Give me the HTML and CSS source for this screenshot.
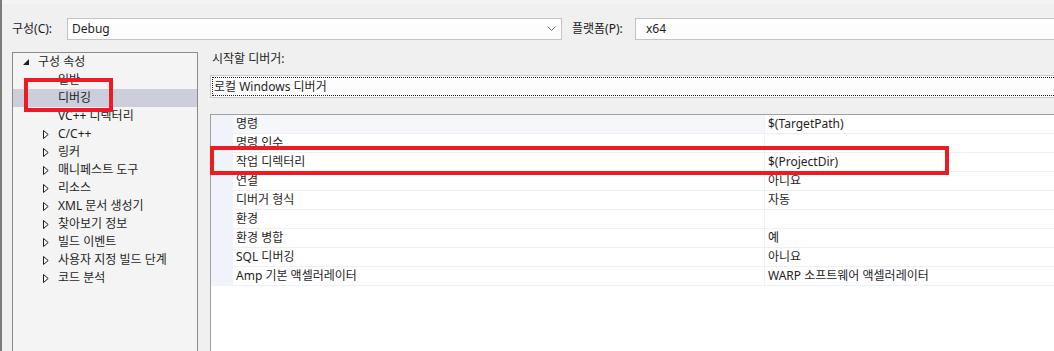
FILE: index.html
```html
<!DOCTYPE html>
<html lang="ko">
<head>
<meta charset="utf-8">
<link rel="stylesheet" href="styles.css">
</head>
<body>
<div class="frame">
  <div class="topband"></div>
  <div class="config-row">
    <span class="lbl lbl-config">구성(C):</span>
    <div class="combo combo-config">
      <span>Debug</span>
      <svg class="chev" width="9" height="6" viewBox="0 0 9 6"><polyline points="0.5,0.5 4.5,4.5 8.5,0.5" fill="none" stroke="#707070" stroke-width="1"/></svg>
    </div>
    <span class="lbl lbl-platform">플랫폼(P):</span>
    <div class="combo combo-platform"><span>x64</span></div>
  </div>
  <div class="main">
    <div class="tree">
      <div class="trow l0"><span class="ico"><svg width="6" height="6" viewBox="0 0 6 6"><polygon points="6,0 6,6 0,6" fill="#1e1e1e"/></svg></span><span>구성 속성</span></div>
      <div class="trow l1"><span class="ico"></span><span>일반</span></div>
      <div class="trow l1 sel"><span class="ico"></span><span>디버깅</span></div>
      <div class="trow l1"><span class="ico"></span><span>VC++ 디렉터리</span></div>
      <div class="trow l1"><span class="ico"><svg width="6" height="9" viewBox="0 0 6 9"><polygon points="0.5,0.5 5.2,4.5 0.5,8.5" fill="none" stroke="#1e1e1e" stroke-width="1"/></svg></span><span>C/C++</span></div>
      <div class="trow l1"><span class="ico"><svg width="6" height="9" viewBox="0 0 6 9"><polygon points="0.5,0.5 5.2,4.5 0.5,8.5" fill="none" stroke="#1e1e1e" stroke-width="1"/></svg></span><span>링커</span></div>
      <div class="trow l1"><span class="ico"><svg width="6" height="9" viewBox="0 0 6 9"><polygon points="0.5,0.5 5.2,4.5 0.5,8.5" fill="none" stroke="#1e1e1e" stroke-width="1"/></svg></span><span>매니페스트 도구</span></div>
      <div class="trow l1"><span class="ico"><svg width="6" height="9" viewBox="0 0 6 9"><polygon points="0.5,0.5 5.2,4.5 0.5,8.5" fill="none" stroke="#1e1e1e" stroke-width="1"/></svg></span><span>리소스</span></div>
      <div class="trow l1"><span class="ico"><svg width="6" height="9" viewBox="0 0 6 9"><polygon points="0.5,0.5 5.2,4.5 0.5,8.5" fill="none" stroke="#1e1e1e" stroke-width="1"/></svg></span><span>XML 문서 생성기</span></div>
      <div class="trow l1"><span class="ico"><svg width="6" height="9" viewBox="0 0 6 9"><polygon points="0.5,0.5 5.2,4.5 0.5,8.5" fill="none" stroke="#1e1e1e" stroke-width="1"/></svg></span><span>찾아보기 정보</span></div>
      <div class="trow l1"><span class="ico"><svg width="6" height="9" viewBox="0 0 6 9"><polygon points="0.5,0.5 5.2,4.5 0.5,8.5" fill="none" stroke="#1e1e1e" stroke-width="1"/></svg></span><span>빌드 이벤트</span></div>
      <div class="trow l1"><span class="ico"><svg width="6" height="9" viewBox="0 0 6 9"><polygon points="0.5,0.5 5.2,4.5 0.5,8.5" fill="none" stroke="#1e1e1e" stroke-width="1"/></svg></span><span>사용자 지정 빌드 단계</span></div>
      <div class="trow l1"><span class="ico"><svg width="6" height="9" viewBox="0 0 6 9"><polygon points="0.5,0.5 5.2,4.5 0.5,8.5" fill="none" stroke="#1e1e1e" stroke-width="1"/></svg></span><span>코드 분석</span></div>
    </div>
    <div class="panel">
      <div class="panel-lbl">시작할 디버거:</div>
      <div class="debugger-box"><div class="focus">로컬 Windows 디버거</div></div>
      <div class="grid">
        <div class="grow first"><span class="gm"></span><span class="gn">명령</span><span class="gv">$(TargetPath)</span></div>
        <div class="grow"><span class="gm"></span><span class="gn">명령 인수</span><span class="gv"></span></div>
        <div class="grow"><span class="gm"></span><span class="gn">작업 디렉터리</span><span class="gv">$(ProjectDir)</span></div>
        <div class="grow"><span class="gm"></span><span class="gn">연결</span><span class="gv">아니요</span></div>
        <div class="grow"><span class="gm"></span><span class="gn">디버거 형식</span><span class="gv">자동</span></div>
        <div class="grow"><span class="gm"></span><span class="gn">환경</span><span class="gv"></span></div>
        <div class="grow"><span class="gm"></span><span class="gn">환경 병합</span><span class="gv">예</span></div>
        <div class="grow"><span class="gm"></span><span class="gn">SQL 디버깅</span><span class="gv">아니요</span></div>
        <div class="grow"><span class="gm"></span><span class="gn">Amp 기본 액셀러레이터</span><span class="gv">WARP 소프트웨어 액셀러레이터</span></div>
      </div>
    </div>
  </div>
</div>
<div class="mark mark-tree"></div>
<div class="mark mark-row"></div>
</body>
</html>
```
FILE: styles.css
```css
html, body {
  margin: 0;
  padding: 0;
}
body {
  width: 1054px;
  height: 351px;
  overflow: hidden;
  background: #f0f0f0;
  font-family: "Noto Sans", "Noto Sans CJK KR", sans-serif;
  font-size: 12px;
  color: #1e1e1e;
  position: relative;
}
.frame {
  height: 351px;
  border-left: 2px solid #7d7b78;
  display: flex;
  flex-direction: column;
}
.topband {
  height: 4px;
  background: #f4f4f4;
}
.config-row {
  display: flex;
  align-items: center;
  margin-top: 14px;
  height: 22px;
  padding-left: 10px;
}
.lbl {
  line-height: 22px;
  color: #1a1a1a;
}
.lbl-config { width: 55px; }
.lbl-platform { width: 63px; margin-left: 10px; }
.combo {
  box-sizing: border-box;
  height: 22px;
  border: 1px solid #c4c4c4;
  background: #fdfdfd;
  display: flex;
  align-items: center;
  padding-left: 4px;
  line-height: 20px;
}
.combo-config {
  width: 495px;
  justify-content: space-between;
  padding-right: 5px;
}
.combo-platform {
  flex: 1;
  margin-right: -10px;
  padding-left: 10px;
}
.chev { display: block; }
.main {
  display: flex;
  margin-top: 12px;
  flex: 1;
  min-height: 0;
}
.tree {
  box-sizing: border-box;
  width: 186px;
  margin-left: 10px;
  border: 1px solid #8a8a8a;
  border-bottom: none;
  background: #f4f4f4;
  padding-top: 0;
}
.trow {
  height: 18px;
  display: flex;
  align-items: center;
  line-height: 18px;
  white-space: nowrap;
}
.trow .ico {
  width: 15px;
  height: 18px;
  display: flex;
  align-items: center;
  flex: none;
}
.trow .ico svg { display: block; }
.l0 .ico { margin-left: 10px; }
.l1 .ico { margin-left: 30px; }
.sel { background: #cccedb; }
.panel {
  flex: 1;
  margin-left: 12px;
  display: flex;
  flex-direction: column;
  min-width: 0;
}
.panel-lbl {
  line-height: 16px;
  margin-top: -1px;
  padding-left: 2px;
}
.debugger-box {
  box-sizing: border-box;
  margin-top: 8px;
  height: 23px;
  border: 1px solid #c8c8c8;
  border-right: none;
  background: #fdfdfd;
  padding: 1px 0 1px 1px;
}
.debugger-box .focus {
  box-sizing: border-box;
  height: 19px;
  border: 1px dotted #202020;
  border-right: none;
  line-height: 17px;
  padding-left: 1px;
}
.grid {
  margin-top: 16px;
  flex: 1;
  background: #ffffff;
  border-top: 1px solid #a0a0a0;
  border-left: 1px solid #a0a0a0;
}
.grow {
  display: flex;
  height: 19px;
}
.gm {
  width: 22px;
  flex: none;
  background: #f0f4fa;
}
.gn, .gv {
  box-sizing: border-box;
  height: 19px;
  line-height: 18px;
  padding-left: 3px;
  border-bottom: 1px solid #edf0f5;
  white-space: nowrap;
}
.gn {
  width: 532px;
  flex: none;
  border-right: 1px solid #edf0f5;
}
.gv {
  flex: 1;
}
.first .gn { background: #f5f7fb; }
.mark {
  position: absolute;
  box-sizing: border-box;
  border: 4px solid #ed1c24;
}
.mark-tree {
  left: 24px;
  top: 78px;
  width: 89px;
  height: 34px;
}
.mark-row {
  left: 210px;
  top: 146px;
  width: 739px;
  height: 29px;
}
```
